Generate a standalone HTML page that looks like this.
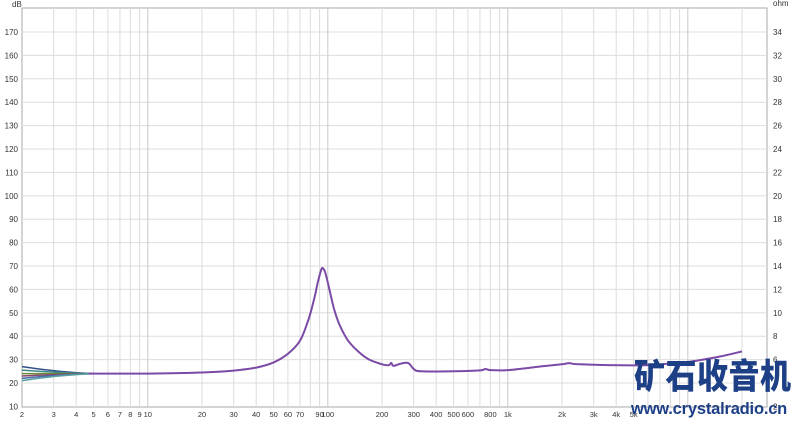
<!DOCTYPE html>
<html><head><meta charset="utf-8"><style>
html,body{margin:0;padding:0;background:#fff;width:800px;height:421px;overflow:hidden}
svg{display:block}
text{font-family:"Liberation Sans",sans-serif;font-size:8px;fill:#333}
.logo{position:absolute;left:634px;top:354px;font-family:"Noto Sans CJK SC","WenQuanYi Zen Hei",sans-serif;font-weight:900;font-size:31px;color:#1d3f86;letter-spacing:0.5px;line-height:36px;transform:scaleY(1.12);transform-origin:left top}
.url{position:absolute;left:631px;top:399px;font-family:"Liberation Sans",sans-serif;font-weight:bold;font-size:16.5px;color:#1d3f86;line-height:20px;letter-spacing:-0.2px}
</style></head><body>
<svg id="s" width="800" height="421" xmlns="http://www.w3.org/2000/svg"></svg>
<div class="logo">矿石收音机</div>
<div class="url">www.crystalradio.cn</div>
<script>
var s=document.getElementById('s'),h='';
var L=22,R=767,T=8,B=407;
function X(f){return L+180*Math.log10(f/2);}
function Y(d){return 406.4-(d-10)*2.34;}
h+='<rect x="'+L+'" y="'+T+'" width="'+(R-L)+'" height="'+(B-T)+'" fill="#fff" stroke="#aaa"/>';
for(var d=20;d<=170;d+=10){h+='<line x1="'+L+'" x2="'+R+'" y1="'+Y(d)+'" y2="'+Y(d)+'" stroke="#ddd"/>';}
var decs=[1,10,100,1000,10000];
for(var i=0;i<decs.length;i++)for(var m=1;m<10;m++){var f=decs[i]*m;if(f<=2)continue;var x=X(f);if(x>=R)break;
var major=(m==1);h+='<line x1="'+x+'" x2="'+x+'" y1="'+T+'" y2="'+B+'" stroke="'+(major?'#c8c8c8':'#dcdcdc')+'"/>';}
for(var d=10;d<=170;d+=10){h+='<text x="'+(L-4)+'" y="'+(Y(d)+3)+'" text-anchor="end">'+d+'</text>';h+='<text x="'+(R+6)+'" y="'+(Y(d)+3)+'">'+(d/5)+'</text>';}
h+='<text x="12" y="7">dB</text><text x="773" y="6">ohm</text>';
var labs=[[2,'2'],[3,'3'],[4,'4'],[5,'5'],[6,'6'],[7,'7'],[8,'8'],[9,'9'],[10,'10'],[20,'20'],[30,'30'],[40,'40'],[50,'50'],[60,'60'],[70,'70'],[90,'90'],[100,'100'],[200,'200'],[300,'300'],[400,'400'],[500,'500'],[600,'600'],[800,'800'],[1000,'1k'],[2000,'2k'],[3000,'3k'],[4000,'4k'],[5000,'5k']];
for(var i=0;i<labs.length;i++)h+='<text x="'+X(labs[i][0])+'" y="417" text-anchor="middle" style="font-size:7.5px">'+labs[i][1]+'</text>';
var pts=[[5,24],[10,24],[20,24.5],[30,25.3],[40,26.6],[50,28.8],[60,32.5],[70,38],[78,47],[84,56],[88,63],[92,68.5],[94,69],[97,67],[102,60],[108,52],[116,45],[130,38],[150,33],[170,30],[200,28],[218,27.6],[225,28.6],[232,27.3],[255,28.3],[280,28.5],[300,26],[330,25],[500,25],[700,25.4],[750,26],[800,25.5],[1000,25.5],[1500,27],[2000,28],[2200,28.5],[2500,28],[5000,27.5],[7000,28],[10000,29],[15000,31.3],[20000,33.5]];
var starts=[[27,'#34508a'],[25.5,'#3a8a8a'],[24,'#6a8a3a'],[23,'#8a4a6a'],[22,'#4a6aaa'],[21,'#5aa0a0']];
for(var k=0;k<starts.length;k++){var p='M'+X(2)+' '+Y(starts[k][0])+' Q'+X(3.2)+' '+Y(24+(starts[k][0]-24)*0.2)+' '+X(5)+' '+Y(24);
h+='<path d="'+p+'" fill="none" stroke="'+starts[k][1]+'" stroke-width="1.5"/>';}
var P=[[X(5),Y(24)]];for(var i=0;i<pts.length;i++)P.push([X(pts[i][0]),Y(pts[i][1])]);
var p='M'+P[0][0].toFixed(1)+' '+P[0][1].toFixed(1);
for(var i=0;i<P.length-1;i++){var a=P[i-1]||P[i],b=P[i],c=P[i+1],d=P[i+2]||c;
p+=' C'+(b[0]+(c[0]-a[0])/6).toFixed(1)+' '+(b[1]+(c[1]-a[1])/6).toFixed(1)+' '+(c[0]-(d[0]-b[0])/6).toFixed(1)+' '+(c[1]-(d[1]-b[1])/6).toFixed(1)+' '+c[0].toFixed(1)+' '+c[1].toFixed(1);}
h+='<path d="'+p+'" fill="none" stroke="#7b4aa6" stroke-width="2" stroke-linejoin="round"/>';
s.innerHTML=h;
</script>
</body></html>
